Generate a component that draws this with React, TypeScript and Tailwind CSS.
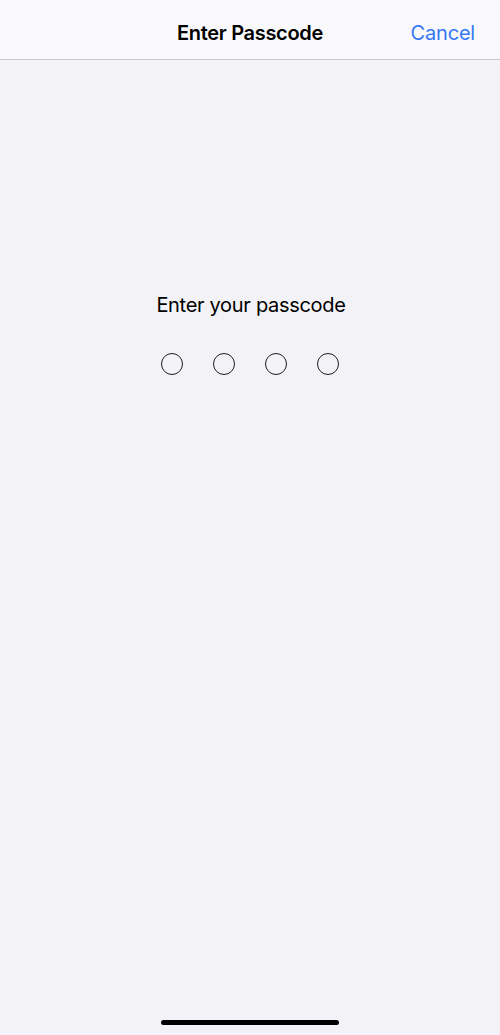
export default function App() {
  return (
    <div
      className="flex h-[1035px] w-full flex-col bg-[#f2f2f7] text-black"
      style={{ fontFamily: "Inter, 'Liberation Sans', sans-serif" }}
    >
      {/* Nav bar */}
      <div className="relative flex h-[60px] shrink-0 items-center justify-center border-b border-[#c8c8cc] bg-[#f9f9fb]">
        <span className="mt-[7px] text-[20px] font-semibold tracking-[-0.3px]">Enter Passcode</span>
        <button className="absolute right-[25px] top-[21px] text-[20px] leading-[24px] tracking-[-0.2px] text-[#3478f6]">
          Cancel
        </button>
      </div>

      {/* Passcode */}
      <div className="flex flex-col items-center pt-[233px]">
        <span className="ml-[2px] text-[20px] leading-[24px] tracking-[-0.3px]">Enter your passcode</span>
        <div className="mt-[36px] flex gap-[30px]">
          {[0, 1, 2, 3].map((i) => (
            <div key={i} className="h-[22px] w-[22px] rounded-full border-[1.5px] border-[#1c1c1e]" />
          ))}
        </div>
      </div>

      <div className="flex-1" />

      {/* Home indicator */}
      <div className="flex justify-center pb-[10px]">
        <div className="h-[5px] w-[178px] rounded-full bg-black" />
      </div>
    </div>
  );
}
